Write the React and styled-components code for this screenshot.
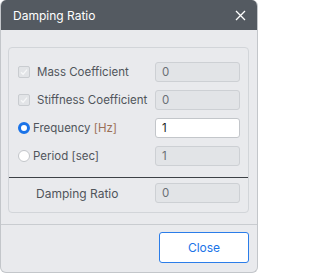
import React from 'react';
import styled, { createGlobalStyle } from 'styled-components';

const GlobalStyle = createGlobalStyle`
  body {
    margin: 0;
    background: #ffffff;
    font-family: Inter, "Noto Sans", sans-serif;
  }
`;

const Dialog = styled.div`
  width: 258px;
  height: 273px;
  box-sizing: border-box;
  background: #e9eaed;
  border: 1px solid #c3c6ca;
  border-top: none;
  border-radius: 6px;
  overflow: hidden;
  display: flex;
  flex-direction: column;
`;

const Header = styled.div`
  height: 30px;
  background: #545a61;
  color: #ffffff;
  display: flex;
  align-items: center;
  justify-content: space-between;
  padding: 0 11px 0 12px;
  font-size: 12px;
`;

const CloseIcon = styled.svg`
  width: 11px;
  height: 11px;
  display: block;
`;

const Body = styled.div`
  padding: 17px 8px 11px 7px;
`;

const Panel = styled.div`
  border: 1px solid #d2d5d9;
  border-radius: 4px;
`;

const Rows = styled.div`
  display: flex;
  flex-direction: column;
  gap: 8px;
  padding: 14px 8px 11px 9px;
`;

const Row = styled.div`
  display: flex;
  align-items: center;
  height: 20px;
`;

const Label = styled.label`
  flex: 1;
  display: flex;
  align-items: center;
  gap: ${p => (p.$radio ? '3px' : '7px')};
  font-size: ${p => (p.$plain ? '12px' : '11.5px')};
  color: #50555b;
  padding-left: ${p => (p.$plain ? '18px' : '0')};
`;

const Check = styled.span`
  width: 10px;
  height: 10px;
  border: 1px solid #c9ccd0;
  border-radius: 2px;
  background: #e2e4e7;
  display: flex;
  align-items: center;
  justify-content: center;
`;

const Radio = styled.span`
  width: ${p => (p.$on ? '6px' : '10px')};
  height: ${p => (p.$on ? '6px' : '10px')};
  border-radius: 50%;
  background: #ffffff;
  border: ${p => (p.$on ? '3px solid #1a73e8' : '1px solid #c3c6ca')};
`;

const Unit = styled.span`
  color: #9a6f56;
`;

const Field = styled.div`
  width: 85px;
  height: 20px;
  box-sizing: border-box;
  border: 1px solid ${p => (p.$active ? '#c3c6ca' : '#cdd0d4')};
  border-radius: 3px;
  background: ${p => (p.$active ? '#ffffff' : '#e2e4e7')};
  color: ${p => (p.$active ? '#1b1f24' : '#6a6f75')};
  font-size: 11.5px;
  display: flex;
  align-items: center;
  padding-left: 6px;
`;

const Separator = styled.div`
  height: 1px;
  background: #3d4146;
`;

const Result = styled.div`
  padding: 5px 8px 9px 9px;
`;

const Footer = styled.div`
  border-top: 1px solid #c9ccd0;
  display: flex;
  justify-content: flex-end;
  padding: 7px 8px 0 0;
`;

const Button = styled.button`
  width: 90px;
  height: 31px;
  border: 1px solid #2b7de9;
  border-radius: 3px;
  background: #ffffff;
  color: #1a73e8;
  font-family: inherit;
  font-size: 12px;
  padding: 0;
`;

const Tick = () => (
  <svg width="8" height="8" viewBox="0 0 8 8">
    <path d="M1 4.2 L3.1 6.2 L7 1.6" fill="none" stroke="#f6f7f8" strokeWidth="1.3" />
  </svg>
);

const App = () => (
  <>
    <GlobalStyle />
    <Dialog>
      <Header>
        <span>Damping Ratio</span>
        <CloseIcon viewBox="0 0 11 11">
          <path d="M1 1 L10 10 M10 1 L1 10" stroke="#ffffff" strokeWidth="1.3" />
        </CloseIcon>
      </Header>
      <Body>
        <Panel>
          <Rows>
            <Row>
              <Label>
                <Check><Tick /></Check>
                Mass Coefficient
              </Label>
              <Field>0</Field>
            </Row>
            <Row>
              <Label>
                <Check><Tick /></Check>
                Stiffness Coefficient
              </Label>
              <Field>0</Field>
            </Row>
            <Row>
              <Label $radio>
                <Radio $on />
                <span>Frequency <Unit>[Hz]</Unit></span>
              </Label>
              <Field $active>1</Field>
            </Row>
            <Row>
              <Label $radio>
                <Radio />
                Period [sec]
              </Label>
              <Field>1</Field>
            </Row>
          </Rows>
          <Separator />
          <Result>
            <Row>
              <Label $plain>Damping Ratio</Label>
              <Field>0</Field>
            </Row>
          </Result>
        </Panel>
      </Body>
      <Footer>
        <Button>Close</Button>
      </Footer>
    </Dialog>
  </>
);

export default App;
